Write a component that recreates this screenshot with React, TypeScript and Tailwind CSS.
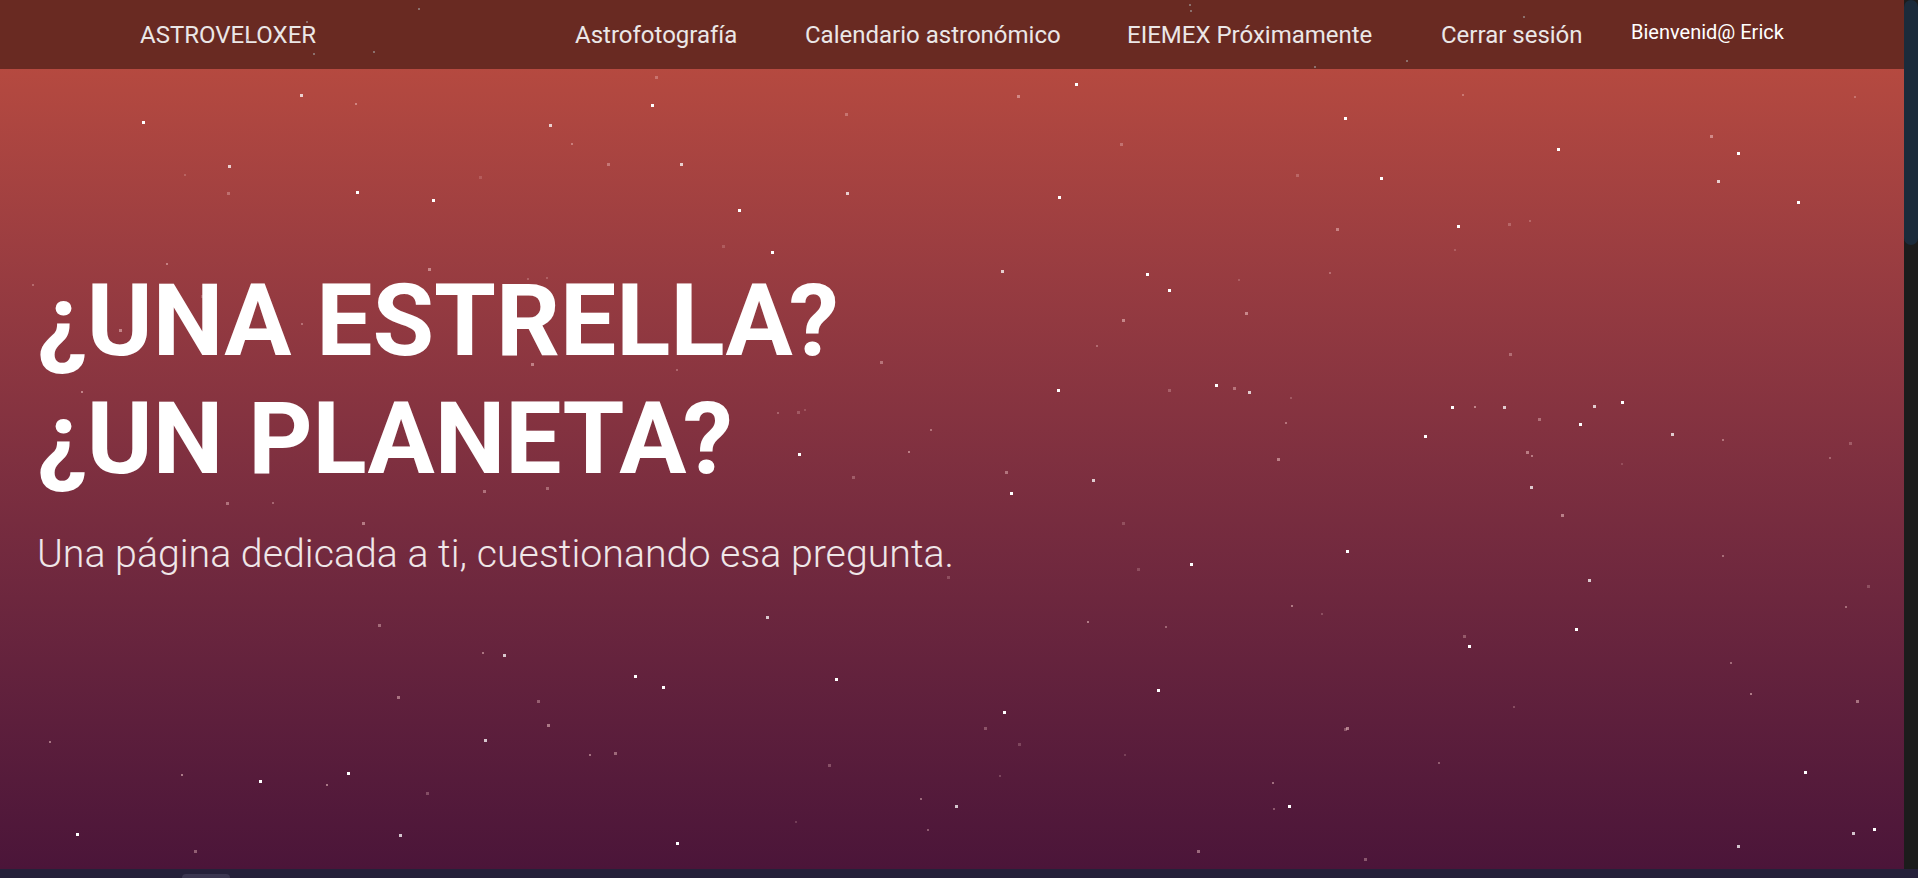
import React from "react";

const bright: [number, number][] = [
  [245, 77], [1099, 96], [879, 68], [556, 133], [865, 160], [603, 171], [692, 157], [1191, 184],
  [630, 205], [818, 221], [937, 223], [955, 236], [1020, 320], [993, 314], [1186, 332], [1229, 332],
  [1291, 346], [1325, 328], [1302, 331], [1164, 356], [1100, 450], [1251, 397], [826, 402], [652, 370],
  [626, 504], [683, 554], [820, 581], [411, 535], [541, 561], [518, 552], [396, 604], [284, 631],
  [212, 638], [781, 658], [946, 563], [1475, 630], [1514, 680], [1288, 513], [1053, 658], [326, 682],
  [553, 688], [62, 681], [1366, 354], [1420, 124], [1273, 121], [1298, 473], [1200, 527], [864, 318],
  [893, 392], [973, 460], [1128, 145], [1404, 147], [1469, 164], [353, 163], [186, 135], [291, 156],
  [116, 99], [449, 101], [532, 85], [1531, 677], [1420, 691],
];

function makeDim() {
  let s = 12345;
  const r = () => {
    s = (s * 1103515245 + 12345) & 0x7fffffff;
    return s / 0x7fffffff;
  };
  const out: { x: number; y: number; size: number; o: number }[] = [];
  for (let i = 0; i < 110; i++) {
    out.push({ x: r() * 1900, y: 70 + r() * 795, size: r() < 0.5 ? 2 : 3, o: 0.2 + r() * 0.35 });
  }
  return out;
}
const dim = makeDim();

const navStars: [number, number][] = [
  [306, 21], [313, 53], [373, 51], [247, 39], [418, 8], [1189, 4], [1190, 10], [1523, 16], [1314, 66], [1406, 60],
];

export default function App() {
  return (
    <div
      className="flex h-[878px] w-[1918px] flex-col overflow-hidden bg-[#25213a]"
      style={{ fontFamily: "Roboto, 'Noto Sans', sans-serif" }}
    >
      <div className="flex h-[869px] w-full">
        <div className="relative flex flex-1 flex-col bg-gradient-to-b from-[#bf4e3f] to-[#4b1539]">
          <nav className="relative z-10 flex h-[69px] items-start bg-[#692a22] pt-[21px] text-[24px] leading-[28px] text-[#ebe7e7]">
            <span className="w-[575px] pl-[140px]">ASTROVELOXER</span>
            <span className="w-[230px]">Astrofotografía</span>
            <span className="w-[322px]">Calendario astronómico</span>
            <span className="w-[314px]">EIEMEX Próximamente</span>
            <span className="w-[190px]">Cerrar sesión</span>
            <span className="-mt-[1px] text-[20px] leading-[24px] text-white">Bienvenid@ Erick</span>
          </nav>
          <div className="pointer-events-none absolute inset-0 z-20">
            {navStars.map(([x, y], i) => (
              <div
                key={"n" + i}
                className="absolute h-[2px] w-[2px] bg-[#9a8f8c] opacity-70"
                style={{ left: x, top: y }}
              />
            ))}
          </div>
          <div className="pointer-events-none absolute inset-0">
            {dim.map((d, i) => (
              <div
                key={"d" + i}
                className="absolute bg-[#f4c9c9]"
                style={{ left: d.x, top: d.y, width: d.size, height: d.size, opacity: d.o }}
              />
            ))}
            {bright.map(([x, y], i) => (
              <div
                key={"b" + i}
                className="absolute h-[3px] w-[3px] bg-white"
                style={{ left: Math.round(x * 1.2232), top: Math.round(y * 1.2232), opacity: i % 3 === 0 ? 0.75 : 1 }}
              />
            ))}
          </div>
          <div className="relative pl-[37px] pt-[193px]">
            <h1 className="text-[100px] font-bold leading-[118px] text-white">
              ¿UNA ESTRELLA?
              <br />
              ¿UN PLANETA?
            </h1>
            <p className="mt-[32px] text-[39.3px] font-light leading-[48px] text-[#efe6e8]">
              Una página dedicada a ti, cuestionando esa pregunta.
            </p>
          </div>
        </div>
        <div className="flex w-[14px] flex-col bg-[#1c1c1c]">
          <div className="h-[245px] w-full rounded-full bg-[#1b2b3b]" />
        </div>
      </div>
      <div className="flex h-[9px] w-full items-end bg-[#25213a] pl-[182px]">
        <div className="h-[4px] w-[48px] rounded-t-[4px] bg-[#3a3650]" />
      </div>
    </div>
  );
}
